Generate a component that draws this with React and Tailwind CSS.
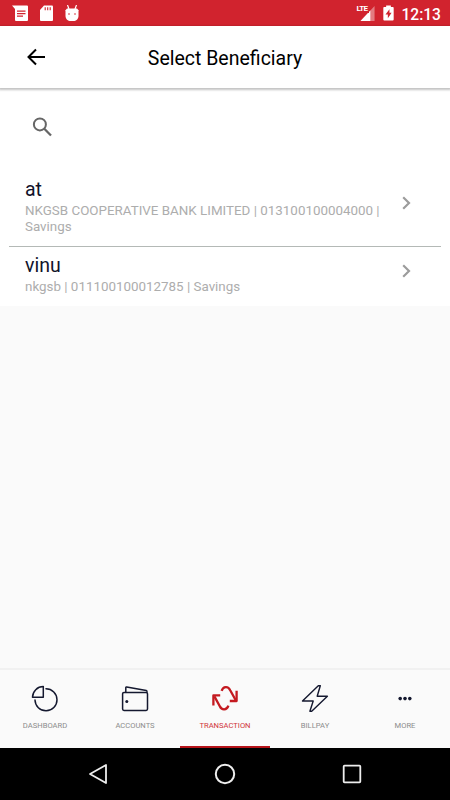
const BENEFICIARIES = [
    { name: 'at', details: 'NKGSB COOPERATIVE BANK LIMITED | 013100100004000 | Savings' },
    { name: 'vinu', details: 'nkgsb | 011100100012785 | Savings' },
];

const DashboardIcon = () => (
    <svg width="30" height="30" viewBox="0 0 30 30" fill="none" stroke="#14182f" strokeWidth="1.5" strokeLinejoin="round">
        <path d="M13.3 2.6v10.6H2.5A10.8 10.8 0 0 1 13.3 2.6Z" />
        <path d="M16 4.8A11 11 0 1 1 5 16" strokeLinecap="round" />
    </svg>
);

const AccountsIcon = () => (
    <svg width="30" height="30" viewBox="0 0 30 30" fill="none" stroke="#14182f" strokeWidth="1.5" strokeLinejoin="round">
        <rect x="2.6" y="8.4" width="24.9" height="18" rx="1.4" />
        <path d="M5.8 8.4V3.6c0-.6.3-.8.9-.7l19.6 3.6c.5.1.8.5.8 1.9" />
        <circle cx="6.8" cy="17.5" r="1.5" fill="#14182f" stroke="none" />
    </svg>
);

const TransactionIcon = () => (
    <svg width="30" height="30" viewBox="0 0 30 30" fill="none" stroke="#c41a20" strokeWidth="2.3" strokeLinejoin="round">
        <path d="M11.6 6.8C13.2 2 18.2 1.8 20.2 6.2L25.6 16" />
        <path d="M19.8 17h6.8V6.800" />
        <path d="M18.400 21.600c-1.600 4.800-6.600 5-8.600.6L4.400 12.400" />
        <path d="M10.200 11.400H3.400v10.200" />
    </svg>
);

const BillpayIcon = () => (
    <svg width="30" height="30" viewBox="0 0 30 30" fill="none" stroke="#14182f" strokeWidth="1.4" strokeLinejoin="round">
        <path d="M20.3 1.7h-2L2.5 17h10.7L9.900 27.300h1.800L27.400 12.200H17.200l3.100-10.500Z" />
    </svg>
);

const MoreIcon = () => (
    <svg width="30" height="30" viewBox="0 0 30 30" fill="#14182f">
        <circle cx="10.2" cy="14.6" r="1.8" />
        <circle cx="15" cy="14.6" r="1.8" />
        <circle cx="19.8" cy="14.6" r="1.8" />
    </svg>
);

const TABS = [
    { label: 'DASHBOARD', Icon: DashboardIcon },
    { label: 'ACCOUNTS', Icon: AccountsIcon },
    { label: 'TRANSACTION', Icon: TransactionIcon, active: true },
    { label: 'BILLPAY', Icon: BillpayIcon },
    { label: 'MORE', Icon: MoreIcon },
];

const StatusBar = () => (
    <div className="flex h-[26px] shrink-0 items-center justify-between bg-[#d1232e] pl-3 pr-[9px] text-white">
        <div className="flex items-center gap-3">
            <svg width="16" height="17" viewBox="0 0 16 17">
                <path d="M0 .5h15a1 1 0 0 1 1 1V15a1 1 0 0 1-1 1H4a1 1 0 0 1-1-1V4Z" fill="#fff" />
                <path d="M5 6.1h8.5M5 8.6h8.5M5 11.1h6" stroke="#d1232e" strokeWidth="1.1" />
            </svg>
            <svg width="13" height="17" viewBox="1 0 13 17">
                <path d="M5 .5h8a1 1 0 0 1 1 1V15a1 1 0 0 1-1 1H2a1 1 0 0 1-1-1V5Z" fill="#fff" />
                <path d="M6.2 2.2v3M8.7 2.2v3M11.2 2.2v3" stroke="#d1232e" strokeWidth="1.1" />
            </svg>
            <svg width="14" height="17" viewBox="0 0 14 17">
                <path d="M2.5 0L4 4M11.5 0L10 4" stroke="#fff" strokeWidth="1.2" />
                <path d="M.5 5.2 2 3.4h10l1.5 1.8V11c0 3-2.5 5-5 5h-3c-2.5 0-5-2-5-5Z" fill="#fff" />
                <circle cx="4" cy="9" r="0.8" fill="#d1232e" />
                <circle cx="10" cy="9" r="0.8" fill="#d1232e" />
            </svg>
        </div>
        <div className="flex items-center">
            <div className="relative mr-2 h-4 w-[19px]">
                <svg className="absolute right-0 bottom-0" width="15" height="15" viewBox="0 0 15 16">
                    <path d="M15 0v16H0Z" fill="#fff" opacity="0.4" />
                    <path d="M10.5 4.8V16H0Z" fill="#fff" />
                </svg>
                <span className="absolute top-0 left-0 bg-[#d1232e] pr-px text-[8px] leading-[8px] font-bold tracking-[-0.6px]">
                    LTE
                </span>
            </div>
            <svg className="mr-[7px]" width="11" height="16" viewBox="0 0 11 17">
                <path d="M3 .5h5V2h2a1 1 0 0 1 1 1v12.5a1 1 0 0 1-1 1H1a1 1 0 0 1-1-1V3a1 1 0 0 1 1-1h2Z" fill="#fff" />
                <path d="M6.5 4.5 2.3 10h2.5v4l4-5.7H6.5Z" fill="#d1232e" />
            </svg>
            <span className="pt-[3px] text-[15.6px] leading-6 font-medium">12:13</span>
        </div>
    </div>
);

const Header = () => (
    <header className="z-10 grid h-[62px] shrink-0 grid-cols-[56px_1fr_56px] items-center bg-white shadow-[0_1px_2px_1px_rgba(0,0,0,0.24)]">
        <button className="pl-[26px]">
            <svg width="20" height="18" viewBox="0 0 20 18" fill="none" stroke="#000" strokeWidth="2">
                <path d="M19 9H3M10 1.5 2.5 9l7.5 7.5" />
            </svg>
        </button>
        <h1 className="pt-[3px] text-center text-[19.5px] leading-6 text-black">Select Beneficiary</h1>
    </header>
);

const BeneficiaryRow = ({ name, details }) => (
    <li className="mx-[9px] flex items-center border-b border-[#b4b9b6] pl-4 last:border-b-0">
        <div className="w-[364px] pt-2 pb-[11px]">
            <p className="text-[19.5px] leading-[22px] text-[#12132b]">{name}</p>
            <p className="mt-0.5 text-[13.38px] leading-4 text-[#adadad]">{details}</p>
        </div>
        <svg className="mb-[11px] ml-[13px]" width="10" height="14" viewBox="0 0 10 14" fill="none" stroke="#9c9c9c" strokeWidth="2.2">
            <path d="m1.2 1.2 5.8 5.8-5.8 5.8" />
        </svg>
    </li>
);

const TabBar = () => (
    <nav className="grid h-[80px] shrink-0 grid-cols-5 border-t-2 border-[#f1f1f1] bg-[#fafafa]">
        {TABS.map(({ label, Icon, active }) => (
            <button
                key={label}
                className={`flex flex-col items-center border-b-2 pt-[14px] ${
                    active ? 'border-[#b51218] text-[#d0353b]' : 'border-transparent text-[#8c8c8c]'
                }`}
            >
                <Icon />
                <span className="mt-[7px] text-[7.6px] leading-[10px]">{label}</span>
            </button>
        ))}
    </nav>
);

const SystemNav = () => (
    <div className="flex h-[52px] shrink-0 items-center justify-between bg-black px-[88px]">
        <svg width="20" height="22" viewBox="0 0 20 22" fill="none" stroke="#eee" strokeWidth="1.8" strokeLinejoin="round">
            <path d="M18 2v18L2 11Z" />
        </svg>
        <svg width="22" height="22" viewBox="0 0 22 22" fill="none" stroke="#eee" strokeWidth="2">
            <circle cx="11" cy="11" r="9.2" />
        </svg>
        <svg width="20" height="20" viewBox="0 0 20 20" fill="none" stroke="#eee" strokeWidth="1.8">
            <rect x="1.7" y="1.7" width="16.6" height="16.6" rx="0.8" />
        </svg>
    </div>
);

const App = () => {
    return (
        <div className="flex h-[800px] w-[450px] flex-col overflow-hidden bg-[#fafafa] font-[Roboto,sans-serif]">
            <StatusBar />
            <Header />
            <main className="flex-1">
                <section className="bg-white">
                    <div className="flex h-[83px] items-start pt-[29px] pl-8">
                        <svg width="21" height="21" viewBox="0 0 21 21" fill="none" stroke="#666" strokeWidth="2">
                            <circle cx="7.9" cy="7.4" r="6" />
                            <path d="m12.3 11.8 6.7 6.7" strokeWidth="2.3" />
                        </svg>
                    </div>
                    <ul>
                        {BENEFICIARIES.map((item) => (
                            <BeneficiaryRow key={item.details} {...item} />
                        ))}
                    </ul>
                </section>
            </main>
            <TabBar />
            <SystemNav />
        </div>
    );
};

export default App;
